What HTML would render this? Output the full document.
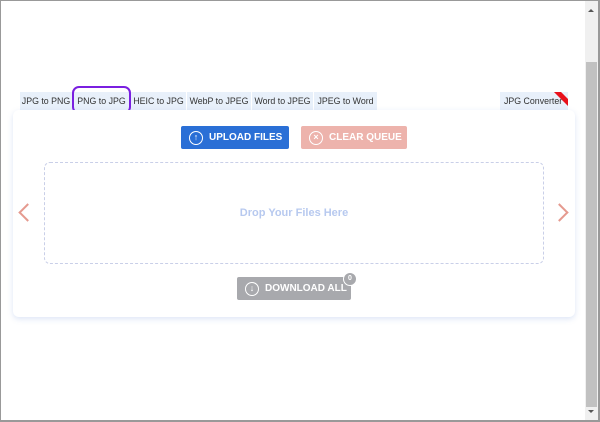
<!DOCTYPE html>
<html><head><style>
*{margin:0;padding:0;box-sizing:border-box}
body{width:600px;height:422px;background:#fff;font-family:"Liberation Sans",Arial,sans-serif;position:relative;overflow:hidden}
.frame{position:absolute;left:0;top:0;width:600px;height:422px;border:1px solid #999;border-right:2px solid #999;border-bottom:2px solid #999}
.sb{position:absolute;left:585px;top:1px;width:13px;height:419px;background:#f0f0f0}
.thumb{position:absolute;left:586px;top:62px;width:11px;height:345px;background:#c1c1c1}
.tab{position:absolute;top:92px;height:18px;background:#e8f0fa;font-size:8.8px;color:#333;line-height:18px;text-align:center}
.card{position:absolute;left:13px;top:110px;width:562px;height:207px;background:#fff;border-radius:6px;box-shadow:0 2px 6px rgba(120,150,220,.25)}
.btn{position:absolute;height:23px;border-radius:2px;color:#fff;font-weight:bold;font-size:10px;line-height:23px}
.ic{position:absolute;left:8px;top:5px;width:14px;height:14px;border:1.5px solid #fff;border-radius:50%;font-size:9px;line-height:11px;text-align:center}
.drop{position:absolute;left:44px;top:162px;width:500px;height:102px;border:1.5px dashed #c9cfe8;border-radius:6px;text-align:center;line-height:100px;color:#b7c9ef;font-weight:bold;font-size:11px}
.arr{position:absolute;top:206px;width:13px;height:13px;border-left:2px solid #e59a8f;border-bottom:2px solid #e59a8f}
</style></head><body>
<div class="frame"></div>
<div class="sb"></div><div class="thumb"></div>
<div style="position:absolute;left:588px;top:6px;border:3px solid transparent;border-bottom:3px solid #555;width:0"></div>
<div style="position:absolute;left:588px;top:410px;border:3px solid transparent;border-top:3px solid #555;width:0"></div>
<div class="tab" style="left:20px;width:52px">JPG to PNG</div>
<div class="tab" style="left:73px;width:57px">PNG to JPG</div>
<div style="position:absolute;left:72px;top:86px;width:59px;height:28px;border:2.5px solid #7a1fe0;border-radius:7px"></div>
<div class="tab" style="left:131px;width:55px">HEIC to JPG</div>
<div class="tab" style="left:187px;width:64px">WebP to JPEG</div>
<div class="tab" style="left:252px;width:61px">Word to JPEG</div>
<div class="tab" style="left:314px;width:63px">JPEG to Word</div>
<div class="tab" style="left:500px;width:68px;text-align:left;padding-left:4px;overflow:hidden">JPG Converter<div style="position:absolute;right:-8px;top:2px;width:28px;height:5px;background:#e8101a;transform:rotate(45deg)"></div></div>
<div class="card"></div>
<div class="btn" style="left:181px;top:126px;width:108px;background:#2a6fd6;padding-left:28px"><span class="ic">↑</span>UPLOAD FILES</div>
<div class="btn" style="left:301px;top:126px;width:106px;background:#edb3ac;padding-left:28px"><span class="ic">×</span>CLEAR QUEUE</div>
<div class="drop">Drop Your Files Here</div>
<div class="arr" style="left:21px;transform:rotate(45deg)"></div>
<div class="arr" style="left:553px;transform:rotate(-135deg)"></div>
<div class="btn" style="left:237px;top:277px;width:114px;background:#a8a9ad;padding-left:28px"><span class="ic">↓</span>DOWNLOAD ALL</div>
<div style="position:absolute;left:343px;top:272px;width:14px;height:14px;border-radius:50%;background:#a8a9ad;border:1.5px solid #fff;color:#fff;font-size:7px;font-weight:bold;text-align:center;line-height:11px">0</div>
</body></html>
